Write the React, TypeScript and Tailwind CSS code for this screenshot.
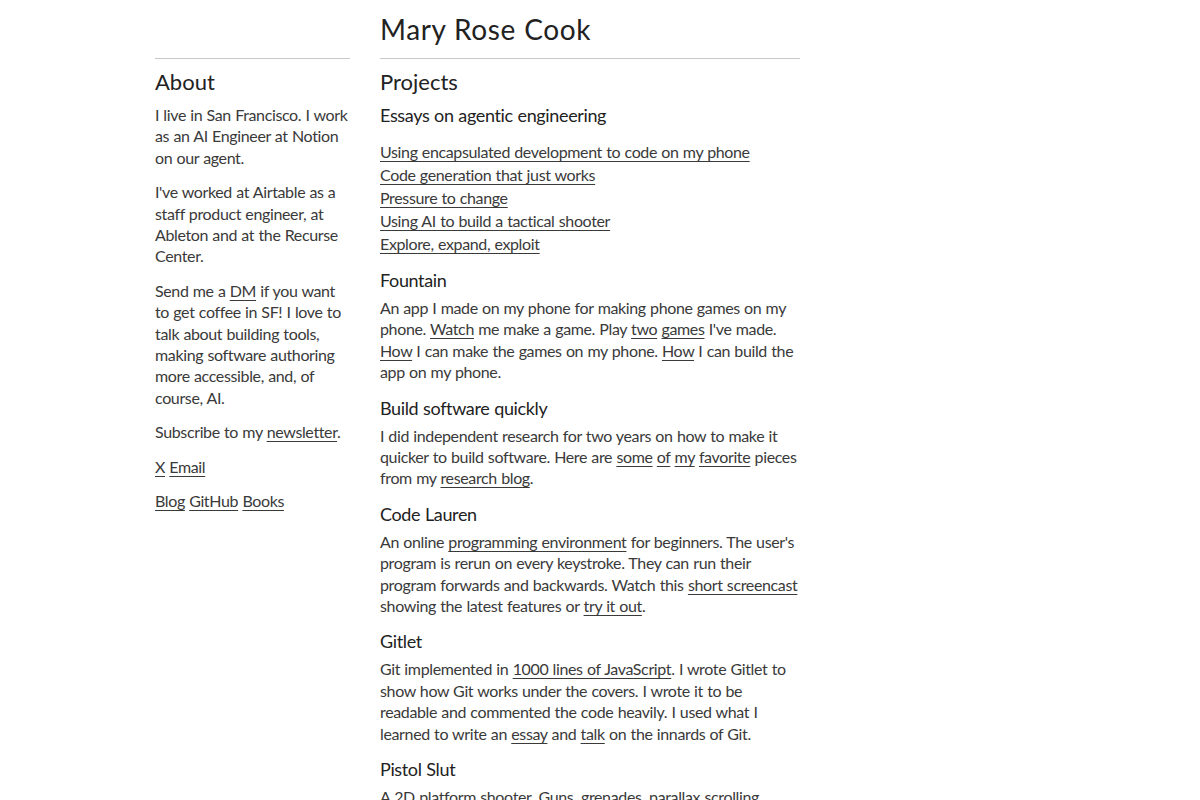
import type { ReactNode } from 'react'

const A = ({ children }: { children: ReactNode }) => (
  <a href="#" className="underline underline-offset-[3px] decoration-1">
    {children}
  </a>
)

const essays = [
  'Using encapsulated development to code on my phone',
  'Code generation that just works',
  'Pressure to change',
  'Using AI to build a tactical shooter',
  'Explore, expand, exploit',
]

function Project({ title, children }: { title: string; children: ReactNode }) {
  return (
    <section className="mt-[13px]">
      <h3 className="text-[18px] leading-[24px] text-[#222]">{title}</h3>
      <p className="mt-[5px]">{children}</p>
    </section>
  )
}

export default function App() {
  return (
    <div className="min-h-[800px] bg-white font-['Gill_Sans','Lato',sans-serif] text-[16px] leading-[21.4px] text-[#3a3a3a] tracking-[-0.36px] [word-spacing:0.5px]">
      <div className="ml-[155px] grid grid-cols-[195px_420px] gap-x-[30px]">
        {/* header row */}
        <div />
        <div className="flex h-[58px] items-end pb-[12px]">
          <h1 className="text-[28px] leading-[34px] tracking-[0.6px] text-[#222]">Mary Rose Cook</h1>
        </div>

        {/* left column */}
        <aside className="border-t border-[#c8c8c8] pt-[9px]">
          <h2 className="text-[22px] leading-[28px] tracking-normal text-[#222]">About</h2>
          <div className="mt-[8px] flex flex-col gap-[13px]">
            <p>I live in San Francisco. I work as an AI Engineer at Notion on our agent.</p>
            <p>I've worked at Airtable as a staff product engineer, at Ableton and at the Recurse Center.</p>
            <p>
              Send me a <A>DM</A> if you want to get coffee in SF! I love to talk about building tools,
              making software authoring more accessible, and, of course, AI.
            </p>
            <p>
              Subscribe to my <A>newsletter</A>.
            </p>
            <p>
              <A>X</A> <A>Email</A>
            </p>
            <p>
              <A>Blog</A> <A>GitHub</A> <A>Books</A>
            </p>
          </div>
        </aside>

        {/* right column */}
        <main className="border-t border-[#c8c8c8] pt-[9px]">
          <h2 className="text-[22px] leading-[28px] tracking-normal text-[#222]">Projects</h2>
          <h3 className="mt-[7px] text-[18px] leading-[24px] text-[#222]">Essays on agentic engineering</h3>
          <ul className="mt-[13px] leading-[23px]">
            {essays.map((e) => (
              <li key={e}>
                <A>{e}</A>
              </li>
            ))}
          </ul>

          <Project title="Fountain">
            An app I made on my phone for making phone games on my phone. <A>Watch</A> me make a game. Play{' '}
            <A>two</A> <A>games</A> I've made. <A>How</A> I can make the games on my phone. <A>How</A> I can
            build the app on my phone.
          </Project>

          <Project title="Build software quickly">
            I did independent research for two years on how to make it quicker to build software. Here are{' '}
            <A>some</A> <A>of</A> <A>my</A> <A>favorite</A> pieces from my <A>research blog</A>.
          </Project>

          <Project title="Code Lauren">
            An online <A>programming environment</A> for beginners. The user's program is rerun on every
            keystroke. They can run their program forwards and backwards. Watch this <A>short screencast</A>{' '}
            showing the latest features or <A>try it out</A>.
          </Project>

          <Project title="Gitlet">
            Git implemented in <A>1000 lines of JavaScript</A>. I wrote Gitlet to show how Git works under the
            covers. I wrote it to be readable and commented the code heavily. I used what I learned to write an{' '}
            <A>essay</A> and <A>talk</A> on the innards of Git.
          </Project>

          <Project title="Pistol Slut">
            A 2D platform shooter. Guns, grenades, parallax scrolling, particle effects and a soundtrack of
            original music.
          </Project>
        </main>
      </div>
    </div>
  )
}
